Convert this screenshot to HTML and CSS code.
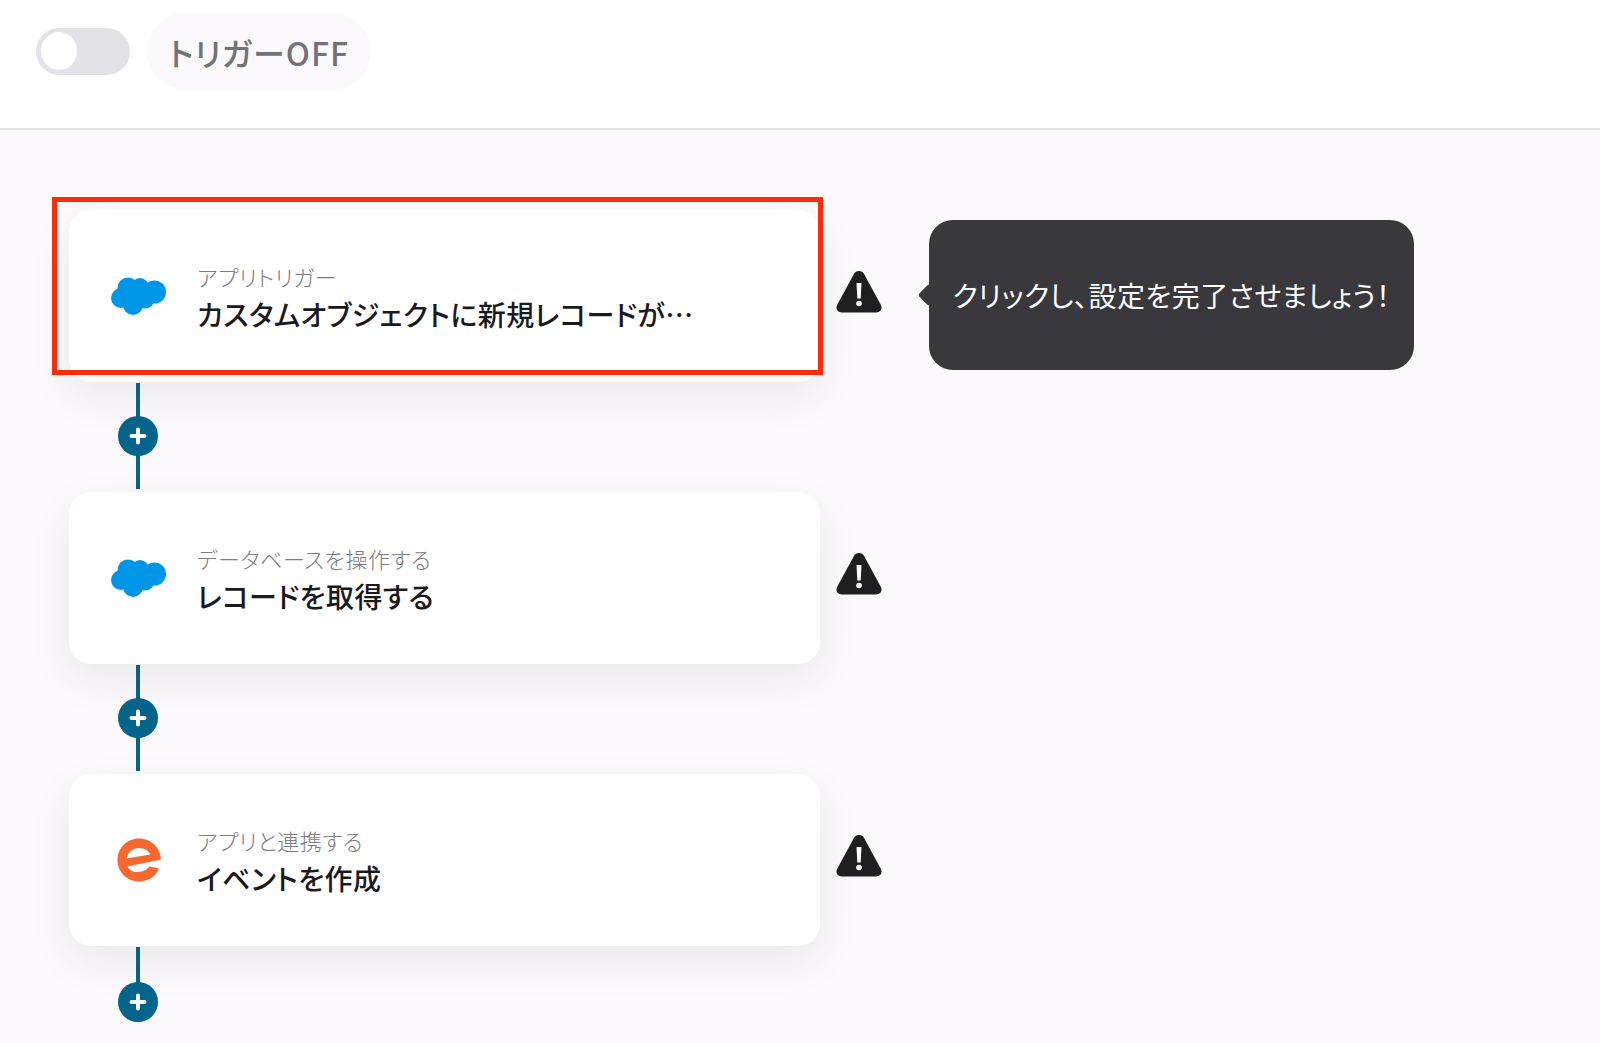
FILE: index.html
```html
<!DOCTYPE html>
<html lang="ja">
<head>
<meta charset="utf-8">
<title>トリガー</title>
<link rel="stylesheet" href="styles.css">
</head>
<body>
<svg class="defs" width="0" height="0" aria-hidden="true">
  <symbol id="sf" viewBox="0 0 55 38">
    <g fill="#0096e8">
      <circle cx="17" cy="11" r="10.5"/>
      <circle cx="29" cy="10" r="9"/>
      <circle cx="43.5" cy="15" r="11.5"/>
      <circle cx="10" cy="21" r="10"/>
      <circle cx="22" cy="28" r="10"/>
      <circle cx="34" cy="22" r="9.5"/>
      <rect x="12" y="10" width="30" height="16"/>
    </g>
  </symbol>
  <symbol id="warn" viewBox="0 0 46 42">
    <path fill="#1f1e21" d="M23 0c2.400 0 4.100 1.200 5.200 3.200L44.800 33.800c2 3.800-.4 7.700-4.500 7.700H5.700c-4.100 0-6.500-3.900-4.500-7.700L17.800 3.200C18.900 1.200 20.600 0 23 0z"/>
    <path fill="#fff" d="M20.500 12h5l-.8 15.500h-3.400z"/>
    <circle fill="#fff" cx="23" cy="32.500" r="2.800"/>
  </symbol>
  <symbol id="plus" viewBox="0 0 40 40">
    <circle cx="20" cy="20" r="20" fill="#05648a"/>
    <path d="M20 13.500v13M13.500 20h13" stroke="#fff" stroke-width="4" stroke-linecap="round"/>
  </symbol>
</svg>

<header class="topbar">
  <span class="toggle"><span class="knob"></span></span>
  <span class="pill">トリガーOFF</span>
</header>

<main class="canvas">
  <section class="step">
    <div class="card">
      <svg class="logo-sf"><use href="#sf"/></svg>
      <div class="texts">
        <div class="sub">アプリトリガー</div>
        <div class="title">カスタムオブジェクトに新規レコードが…</div>
      </div>
    </div>
    <svg class="warn"><use href="#warn"/></svg>
    <div class="tooltip">クリックし、設定を完了させましょう！</div>
    <div class="highlight"></div>
  </section>
  <div class="connector"><svg class="plus"><use href="#plus"/></svg></div>

  <section class="step">
    <div class="card">
      <svg class="logo-sf"><use href="#sf"/></svg>
      <div class="texts">
        <div class="sub">データベースを操作する</div>
        <div class="title">レコードを取得する</div>
      </div>
    </div>
    <svg class="warn"><use href="#warn"/></svg>
  </section>
  <div class="connector"><svg class="plus"><use href="#plus"/></svg></div>

  <section class="step">
    <div class="card">
      <svg class="logo-eb" viewBox="0 0 44 44">
        <path fill="#f6682f" d="M22 0.500C34 0.500 43.500 9.500 44 21.500L10.500 28.500C12.500 32.500 17 34.500 22 34C27 33.500 30 31.500 32.500 28.500L42 30.500C39 38.500 31 43.500 22 43.500C10 43.500 0.500 34 0.500 22C0.500 10 10 0.500 22 0.500Z"/>
        <path fill="#fff" d="M9.600 20.500C11 14 16 10 22 10C27.500 10 31.500 12.800 33.300 16.500Z"/>
      </svg>
      <div class="texts">
        <div class="sub">アプリと連携する</div>
        <div class="title">イベントを作成</div>
      </div>
    </div>
    <svg class="warn"><use href="#warn"/></svg>
  </section>
  <div class="connector connector-end"><svg class="plus"><use href="#plus"/></svg></div>
</main>
</body>
</html>
```

FILE: styles.css
```css
* { box-sizing: border-box; }
html, body { margin: 0; height: 100%; }
body {
  height: 1043px;
  overflow: hidden;
  background: #fbf9fc;
  font-family: "Noto Sans CJK JP", "Noto Sans", sans-serif;
  font-feature-settings: "palt";
}
.defs { position: absolute; }
.topbar {
  height: 130px;
  background: #fff;
  border-bottom: 2px solid #e3e2e6;
  display: flex;
  align-items: flex-start;
  padding: 13px 0 0 36px;
}
.toggle {
  width: 94px;
  height: 47px;
  margin-top: 15px;
  border-radius: 24px;
  background: #e3e2e6;
  padding: 4px 5px;
  display: block;
}
.knob {
  display: block;
  width: 36px;
  height: 38px;
  border-radius: 50%;
  background: #fff;
}
.pill {
  margin-left: 17px;
  height: 77px;
  width: 224px;
  border-radius: 39px;
  background: #fbf9fc;
  color: #737276;
  font-size: 32px;
  font-weight: 500;
  letter-spacing: 1px;
  display: flex;
  align-items: center;
  justify-content: center;
}
.canvas {
  padding: 80px 0 0 69px;
}
.step {
  position: relative;
  display: flex;
  align-items: center;
}
.card {
  width: 751px;
  height: 172px;
  background: #fff;
  border-radius: 22px;
  box-shadow: 0 16px 40px rgba(60, 50, 70, 0.08);
  display: flex;
  align-items: center;
  padding: 0 0 0 42px;
}
.logo-sf { width: 55px; height: 38px; flex: none; }
.logo-eb { width: 44px; height: 44px; flex: none; margin-left: 6px; margin-right: 5px; }
.texts { margin: -1px 0 0 31px; }
.sub {
  font-size: 22px;
  line-height: 36px;
  letter-spacing: 0.55px;
  color: #7c7b7f;
  font-weight: 300;
}
.title {
  font-size: 28px;
  line-height: 40px;
  letter-spacing: 0.42px;
  color: #1a191c;
  font-weight: 500;
}
.warn { width: 46px; height: 42px; margin: -9px 0 0 16px; flex: none; }
.tooltip {
  position: absolute;
  left: 860px;
  top: 10px;
  width: 485px;
  height: 150px;
  border-radius: 24px;
  background: #39383c;
  color: #fff;
  font-size: 28px;
  letter-spacing: 0.5px;
  font-weight: 400;
  display: flex;
  align-items: center;
  justify-content: center;
  white-space: nowrap;
}
.tooltip::before {
  content: "";
  position: absolute;
  left: -8px;
  top: 67px;
  width: 16px;
  height: 16px;
  border-radius: 3px;
  background: #39383c;
  transform: rotate(45deg);
}
.highlight {
  position: absolute;
  left: -17px;
  top: -13px;
  width: 771px;
  height: 178px;
  border: 5px solid #f72d0c;
}
.connector {
  height: 106px;
  width: 4px;
  margin: 1px 0 3px 67px;
  background: #05648a;
  display: flex;
  align-items: center;
  justify-content: center;
}
.connector-end {
  height: 75px;
  align-items: flex-end;
  margin-bottom: 0;
}
.plus { width: 40px; height: 40px; flex: none; }
```
